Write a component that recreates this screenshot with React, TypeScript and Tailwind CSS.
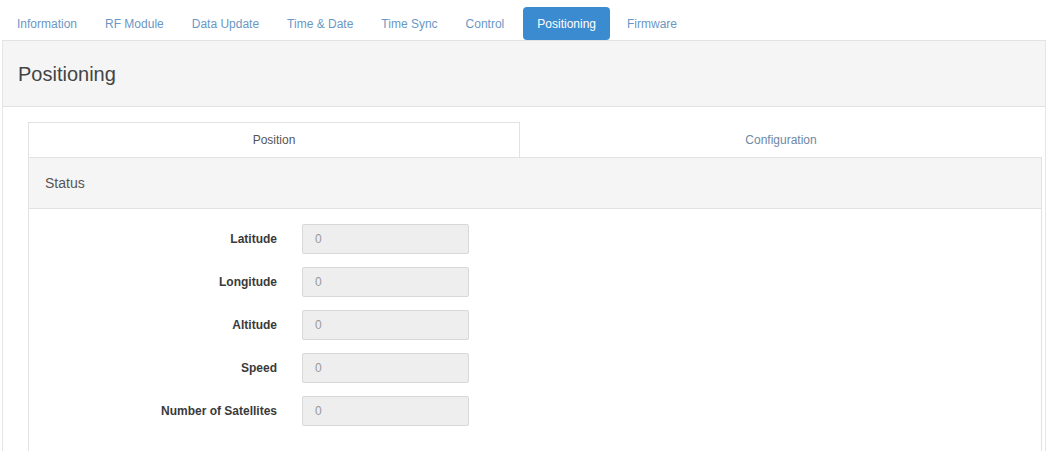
import React from 'react'

const navItems = ['Information', 'RF Module', 'Data Update', 'Time & Date', 'Time Sync', 'Control', 'Positioning', 'Firmware']

const fields = ['Latitude', 'Longitude', 'Altitude', 'Speed', 'Number of Satellites']

const App: React.FC = () => {
  return (
    <div className="w-[1056px] h-[451px] overflow-hidden bg-white text-[12px] text-[#333]" style={{ fontFamily: '"Liberation Sans", Arial, sans-serif' }}>
      {/* TOP NAV */}
      <nav className="mx-[2px] w-[1044px] pt-[7px] border-b border-[#e2e2e2]">
        <ul className="flex flex-row gap-[2px] pl-[2px]">
          {navItems.map((item) =>
            item === 'Positioning' ? (
              <li key={item} className="h-[33px] px-[14px] ml-[4px] mr-[2px] flex items-center rounded-[4px] bg-[#3b8bd0] text-white">
                {item}
              </li>
            ) : (
              <li key={item} className="h-[33px] px-[13px] flex items-center text-[#6b97c4]">
                {item}
              </li>
            )
          )}
        </ul>
      </nav>

      {/* PAGE PANEL */}
      <section className="mx-[2px] w-[1044px] border-x border-[#e6e6e6]">
        <div className="h-[66px] px-[15px] flex items-center bg-[#f5f5f5] border-b border-[#e2e2e2] text-[20px] text-[#444]">
          Positioning
        </div>
        <div className="pl-[25px] pr-[3px] pt-[15px]">
          {/* TABS */}
          <div className="flex flex-row h-[35px]">
            <div className="w-[492px] flex items-center justify-center bg-white border border-b-0 border-[#e2e2e2] text-[#555]">
              Position
            </div>
            <div className="flex-1 flex items-center justify-center text-[#6d89a6]">Configuration</div>
          </div>

          {/* STATUS PANEL */}
          <div className="border border-[#e2e2e2] h-[300px]">
            <div className="h-[51px] pl-[16px] flex items-center bg-[#f5f5f5] border-b border-[#e2e2e2] text-[14px] text-[#555]">
              Status
            </div>
            <div className="pt-[15px] flex flex-col gap-[13px]">
              {fields.map((f) => (
                <div key={f} className="flex flex-row items-center">
                  <label className="w-[248px] text-right font-bold text-[#3a3a3a]">{f}</label>
                  <div className="ml-[25px] w-[167px] h-[30px] px-[12px] flex items-center bg-[#eeeeee] border border-[#d8d8d8] rounded-[2px] text-[#999]">
                    0
                  </div>
                </div>
              ))}
            </div>
          </div>
        </div>
      </section>
    </div>
  )
}
export default App
